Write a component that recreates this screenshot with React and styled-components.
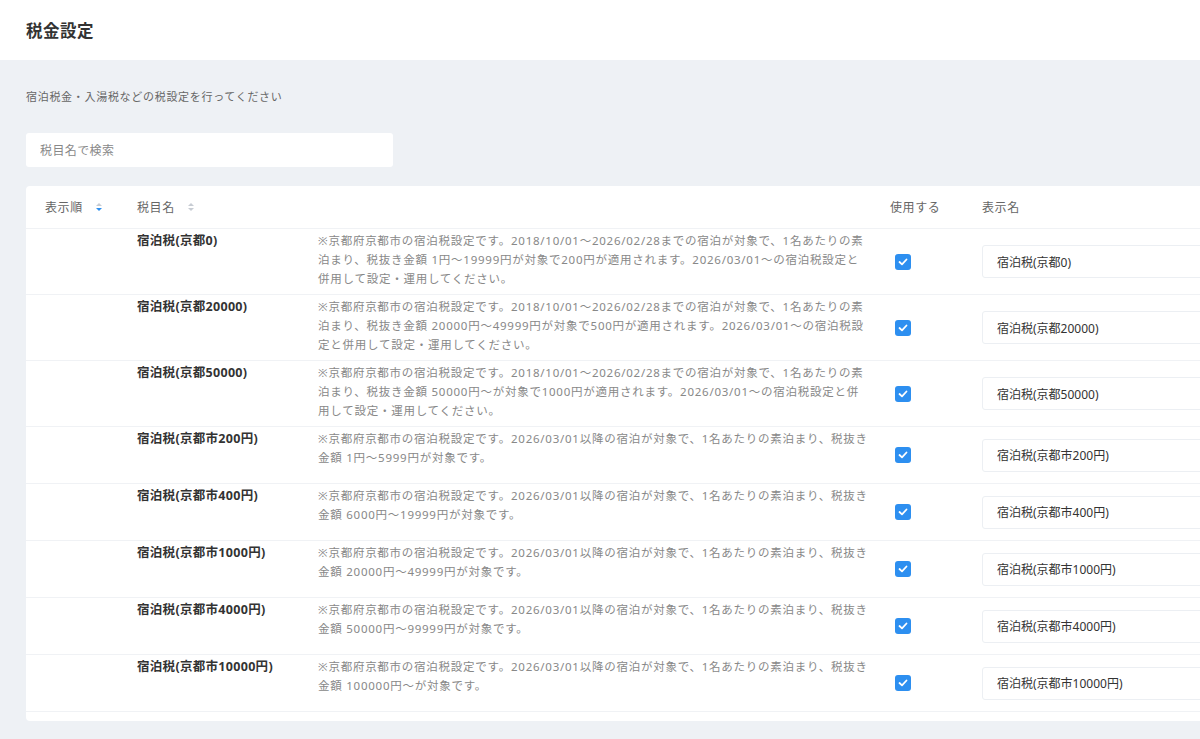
import React from 'react'
import styled, { createGlobalStyle } from 'styled-components'

const Global = createGlobalStyle`
  body { margin: 0; background: #eef1f5; font-family: "Noto Sans", "Noto Sans CJK JP", sans-serif; overflow: hidden; }
`

const rows = [
  ['宿泊税(京都0)', '※京都府京都市の宿泊税設定です。2018/10/01～2026/02/28までの宿泊が対象で、1名あたりの素泊まり、税抜き金額 1円～19999円が対象で200円が適用されます。2026/03/01～の宿泊税設定と併用して設定・運用してください。'],
  ['宿泊税(京都20000)', '※京都府京都市の宿泊税設定です。2018/10/01～2026/02/28までの宿泊が対象で、1名あたりの素泊まり、税抜き金額 20000円～49999円が対象で500円が適用されます。2026/03/01～の宿泊税設定と併用して設定・運用してください。'],
  ['宿泊税(京都50000)', '※京都府京都市の宿泊税設定です。2018/10/01～2026/02/28までの宿泊が対象で、1名あたりの素泊まり、税抜き金額 50000円～が対象で1000円が適用されます。2026/03/01～の宿泊税設定と併用して設定・運用してください。'],
  ['宿泊税(京都市200円)', '※京都府京都市の宿泊税設定です。2026/03/01以降の宿泊が対象で、1名あたりの素泊まり、税抜き金額 1円～5999円が対象です。'],
  ['宿泊税(京都市400円)', '※京都府京都市の宿泊税設定です。2026/03/01以降の宿泊が対象で、1名あたりの素泊まり、税抜き金額 6000円～19999円が対象です。'],
  ['宿泊税(京都市1000円)', '※京都府京都市の宿泊税設定です。2026/03/01以降の宿泊が対象で、1名あたりの素泊まり、税抜き金額 20000円～49999円が対象です。'],
  ['宿泊税(京都市4000円)', '※京都府京都市の宿泊税設定です。2026/03/01以降の宿泊が対象で、1名あたりの素泊まり、税抜き金額 50000円～99999円が対象です。'],
  ['宿泊税(京都市10000円)', '※京都府京都市の宿泊税設定です。2026/03/01以降の宿泊が対象で、1名あたりの素泊まり、税抜き金額 100000円～が対象です。'],
]

const SortIcon = ({ active }) => (
  <svg width="8" height="10" viewBox="0 0 8 10" style={{ marginLeft: 12 }}>
    <path d="M1 4 L4 1 L7 4Z" fill="#c7ccd3" />
    <path d="M1 6 L4 9 L7 6Z" fill={active ? '#2d8ff0' : '#c7ccd3'} />
  </svg>
)

export default function App() {
  return (
    <>
      <Global />
      <TopBar><Title>税金設定</Title></TopBar>
      <Main>
        <Lead>宿泊税金・入湯税などの税設定を行ってください</Lead>
        <Search placeholder="税目名で検索" />
        <Card>
          <HeadRow>
            <HeadCell>表示順<SortIcon active /></HeadCell>
            <HeadCell>税目名<SortIcon /></HeadCell>
            <HeadCell />
            <HeadCell $pad>使用する</HeadCell>
            <HeadCell>表示名</HeadCell>
          </HeadRow>
          <Body>
            {rows.map(([name, desc]) => (
              <Row key={name}>
                <div />
                <Name>{name}</Name>
                <Desc>{desc}</Desc>
                <Center><Check><svg width="10" height="8" viewBox="0 0 10 8"><path d="M1.5 4 L4 6.3 L8.5 1.5" stroke="#fff" strokeWidth="1.8" fill="none" strokeLinecap="round" strokeLinejoin="round" /></svg></Check></Center>
                <Center><NameInput defaultValue={name} /></Center>
              </Row>
            ))}
          </Body>
        </Card>
      </Main>
    </>
  )
}

const TopBar = styled.div`
  height: 60px;
  background: #fff;
  display: flex;
  align-items: center;
  padding-left: 26px;
`
const Title = styled.h1`
  margin: 0;
  font-size: 16.5px;
  font-weight: 700;
  letter-spacing: 0.5px;
  color: #333;
`
const Main = styled.div`
  padding: 26px 0 0 26px;
`
const Lead = styled.p`
  margin: 3px 0 0;
  font-size: 11px;
  letter-spacing: 0.7px;
  color: #666;
  line-height: 16px;
`
const Search = styled.input`
  display: block;
  margin-top: 28px;
  width: 367px;
  height: 34px;
  box-sizing: border-box;
  border: none;
  border-radius: 3px;
  padding: 0 14px;
  font-size: 12px;
  letter-spacing: 0.4px;
  font-family: inherit;
  &::placeholder { color: #888; }
`
const Card = styled.div`
  margin-top: 19px;
  width: 1220px;
  background: #fff;
  border-radius: 4px;
`
const grid = `
  display: grid;
  grid-template-columns: 92px 181px 562px 102px 1fr;
  padding-left: 19px;
`
const HeadRow = styled.div`
  ${grid}
  height: 42px;
  align-items: center;
  border-bottom: 1px solid #f0f2f5;
`
const HeadCell = styled.div`
  display: flex;
  align-items: center;
  font-size: 12px;
  letter-spacing: 0.6px;
  color: #666;
  padding-left: ${p => (p.$pad ? '10px' : '0')};
`
const Body = styled.div`
  height: 492px;
  overflow: hidden;
`
const Row = styled.div`
  ${grid}
  min-height: 56px;
  border-bottom: 1px solid #f0f2f5;
`
const Name = styled.div`
  padding-top: 1px;
  font-size: 12.5px;
  font-weight: 700;
  letter-spacing: 0.3px;
  color: #333;
`
const Desc = styled.div`
  padding: 2px 10px 6px 0;
  font-size: 11.5px;
  letter-spacing: 0.75px;
  line-height: 19px;
  color: #888;
`
const Center = styled.div`
  display: flex;
  align-items: center;
  padding-left: 15px;
`
const Check = styled.span`
  width: 16px;
  height: 16px;
  border-radius: 3px;
  background: #2d8ff0;
  display: flex;
  align-items: center;
  justify-content: center;
`
const NameInput = styled.input`
  margin-left: -15px;
  width: 260px;
  height: 33px;
  box-sizing: border-box;
  border: 1px solid #eceff3;
  border-radius: 3px;
  padding: 0 14px;
  font-size: 12px;
  font-family: inherit;
  color: #333;
`
